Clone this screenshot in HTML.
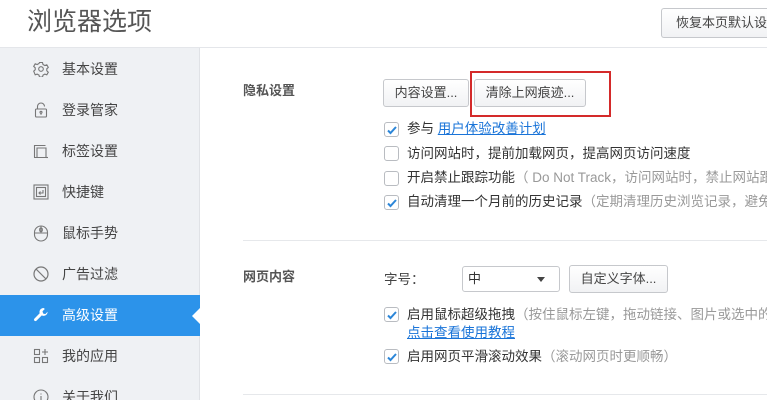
<!DOCTYPE html>
<html><head><meta charset="utf-8"><style>
*{margin:0;padding:0;box-sizing:border-box}
html,body{width:767px;height:400px;overflow:hidden}
body{background:#fff;font-family:"Liberation Sans","Noto Sans CJK SC",sans-serif;color:#333}
#w{position:relative;width:767px;height:400px;overflow:hidden}
.abs{position:absolute}
.title{left:27px;top:5px;font-size:25px;color:#555;line-height:34px}
.hdr{left:0;top:47px;width:767px;height:1px;background:#e4e6ea}
.side{left:0;top:48px;width:200px;height:352px;background:#eff1f4;border-right:1px solid #e0e2e6}
.item{position:absolute;left:0;width:200px;height:41px;line-height:41px;font-size:14px;color:#444}
.item span{position:absolute;left:62px}
.item svg{position:absolute;left:33px;top:12px}
.act{background:#2c93ea;color:#fff}
.btn{position:absolute;border:1px solid #c6c8cc;border-radius:3px;background:linear-gradient(#fff,#f1f2f4);font-size:13px;color:#444;text-align:center;white-space:nowrap;overflow:hidden}
.sec{font-size:13px;font-weight:bold;color:#555;left:243px}
.cb{position:absolute;left:384px;width:15px;height:15px;border:1px solid #b9bcc1;border-radius:3px;background:#fff}
.cb svg{position:absolute;left:1px;top:1px}
.t{position:absolute;left:407px;font-size:13.5px;color:#333;white-space:nowrap;line-height:16px}
.g{color:#999}
.lnk{color:#1a74d8;text-decoration:underline}
.line{height:1px;background:#e6e8eb;left:243px;width:524px}
</style></head><body><div id="w">
<div class="abs title">浏览器选项</div>
<div class="btn" style="left:661px;top:8px;width:106px;height:30px;line-height:28px;text-align:left;padding-left:14px;border-right:none;border-radius:3px 0 0 3px">恢复本页默认设置</div>
<div class="abs hdr"></div>
<div class="abs side">
 <div class="item" style="top:1px"><svg width="16" height="16" viewBox="0 0 16 16" fill="none" stroke="#777" stroke-width="1.1"><path d="M6.5 1.5h3l.5 2 1.8 1 2-.7 1.5 2.6-1.5 1.4v2l1.5 1.4-1.5 2.6-2-.7-1.8 1-.5 2h-3l-.5-2-1.8-1-2 .7L.7 10.2 2.2 8.8v-2L.7 5.4 2.2 2.8l2 .7 1.8-1z"/><circle cx="8" cy="8" r="2.3"/></svg><span>基本设置</span></div>
 <div class="item" style="top:42px"><svg width="16" height="16" viewBox="0 0 16 16" fill="none" stroke="#777" stroke-width="1.1"><path d="M4.5 7V4.5a3.5 3.5 0 0 1 7 0"/><rect x="2.5" y="7" width="11" height="8" rx="1"/><circle cx="8" cy="10.3" r="1"/><path d="M8 11.3v1.5"/></svg><span>登录管家</span></div>
 <div class="item" style="top:83px"><svg width="16" height="16" viewBox="0 0 16 16" fill="none" stroke="#777" stroke-width="1.1"><path d="M1.5 14.5V2.5h11"/><path d="M4 14.5V5h9v9.5H1"/><path d="M13 14.5h2"/></svg><span>标签设置</span></div>
 <div class="item" style="top:124px"><svg width="16" height="16" viewBox="0 0 16 16" fill="none" stroke="#777" stroke-width="1.1"><rect x="1" y="1" width="14" height="14"/><rect x="3.5" y="3.5" width="9" height="9"/><path d="M10 6v3H6M7.5 7.5 6 9l1.5 1.5"/></svg><span>快捷键</span></div>
 <div class="item" style="top:165px"><svg width="16" height="17" viewBox="0 0 16 17" fill="none" stroke="#777" stroke-width="1.1"><rect x="1.5" y="1" width="13" height="15" rx="6.5"/><path d="M1.5 8h13M8 1v7"/><rect x="6.7" y="3" width="2.6" height="3.5" rx="1.3"/></svg><span>鼠标手势</span></div>
 <div class="item" style="top:206px"><svg width="16" height="16" viewBox="0 0 16 16" fill="none" stroke="#777" stroke-width="1.2"><circle cx="8" cy="8" r="7"/><path d="M3 3l10 10"/></svg><span>广告过滤</span></div>
 <div class="item act" style="top:247px"><svg width="16" height="16" viewBox="0 0 16 16"><path d="M10.5 1a4 4 0 0 0-3.8 5.3L1.3 11.7a1.5 1.5 0 0 0 2.1 2.1l5.4-5.4A4 4 0 0 0 14.6 4.8l-2.3 2.3-2.2-.6-.6-2.2L11.8 2A4 4 0 0 0 10.5 1z" fill="#fff"/></svg><span>高级设置</span>
  <div style="position:absolute;right:0;top:13px;width:0;height:0;border-top:8px solid transparent;border-bottom:8px solid transparent;border-right:8px solid #fff"></div></div>
 <div class="item" style="top:288px"><svg width="16" height="16" viewBox="0 0 16 16" fill="none" stroke="#777" stroke-width="1.1"><rect x="1.5" y="1.5" width="5" height="5"/><rect x="1.5" y="9.5" width="5" height="5"/><rect x="9.5" y="9.5" width="5" height="5"/><path d="M12 1v6M9 4h6"/></svg><span>我的应用</span></div>
 <div class="item" style="top:329px"><svg width="16" height="16" viewBox="0 0 16 16" fill="none" stroke="#777" stroke-width="1.1"><circle cx="8" cy="8" r="7"/><path d="M8 7v5M8 4.5v1"/></svg><span>关于我们</span></div>
</div>

<div class="abs sec" style="top:80px">隐私设置</div>
<div class="btn" style="left:383px;top:79px;width:86px;height:28px;line-height:26px">内容设置...</div>
<div class="btn" style="left:474px;top:79px;width:112px;height:28px;line-height:26px">清除上网痕迹...</div>
<div class="abs" style="left:470px;top:71px;width:141px;height:46px;border:2px solid #d42a2a"></div>

<div class="cb" style="top:122px"><svg width="12" height="12" viewBox="0 0 12 12"><path d="M2 6.5l2.5 2.5L10 3" fill="none" stroke="#2c86d8" stroke-width="2"/></svg></div>
<div class="t" style="top:121px">参与 <span class="lnk">用户体验改善计划</span></div>
<div class="cb" style="top:146px"></div>
<div class="t" style="top:146px">访问网站时，提前加载网页，提高网页访问速度</div>
<div class="cb" style="top:171px"></div>
<div class="t" style="top:170px">开启禁止跟踪功能<span class="g">（ Do Not Track，访问网站时，禁止网站跟踪）</span></div>
<div class="cb" style="top:195px"><svg width="12" height="12" viewBox="0 0 12 12"><path d="M2 6.5l2.5 2.5L10 3" fill="none" stroke="#2c86d8" stroke-width="2"/></svg></div>
<div class="t" style="top:194px">自动清理一个月前的历史记录<span class="g">（定期清理历史浏览记录，避免占用过多空间）</span></div>

<div class="abs line" style="top:240px"></div>
<div class="abs sec" style="top:266px">网页内容</div>
<div class="t" style="left:384px;top:272px;color:#444">字号：</div>
<div class="abs" style="left:462px;top:266px;width:98px;height:26px;border:1px solid #c6c8cc;border-radius:3px;background:#fff;font-size:13px;line-height:24px;padding-left:5px">中<div style="position:absolute;right:14px;top:10px;border-left:4px solid transparent;border-right:4px solid transparent;border-top:5px solid #444"></div></div>
<div class="btn" style="left:569px;top:265px;width:99px;height:28px;line-height:26px">自定义字体...</div>
<div class="cb" style="top:307px"><svg width="12" height="12" viewBox="0 0 12 12"><path d="M2 6.5l2.5 2.5L10 3" fill="none" stroke="#2c86d8" stroke-width="2"/></svg></div>
<div class="t" style="top:307px">启用鼠标超级拖拽<span class="g">（按住鼠标左键，拖动链接、图片或选中的文字）</span></div>
<div class="t" style="top:325px"><span class="lnk">点击查看使用教程</span></div>
<div class="cb" style="top:349px"><svg width="12" height="12" viewBox="0 0 12 12"><path d="M2 6.5l2.5 2.5L10 3" fill="none" stroke="#2c86d8" stroke-width="2"/></svg></div>
<div class="t" style="top:349px">启用网页平滑滚动效果<span class="g">（滚动网页时更顺畅）</span></div>
<div class="abs line" style="top:394px"></div>
</div></body></html>
